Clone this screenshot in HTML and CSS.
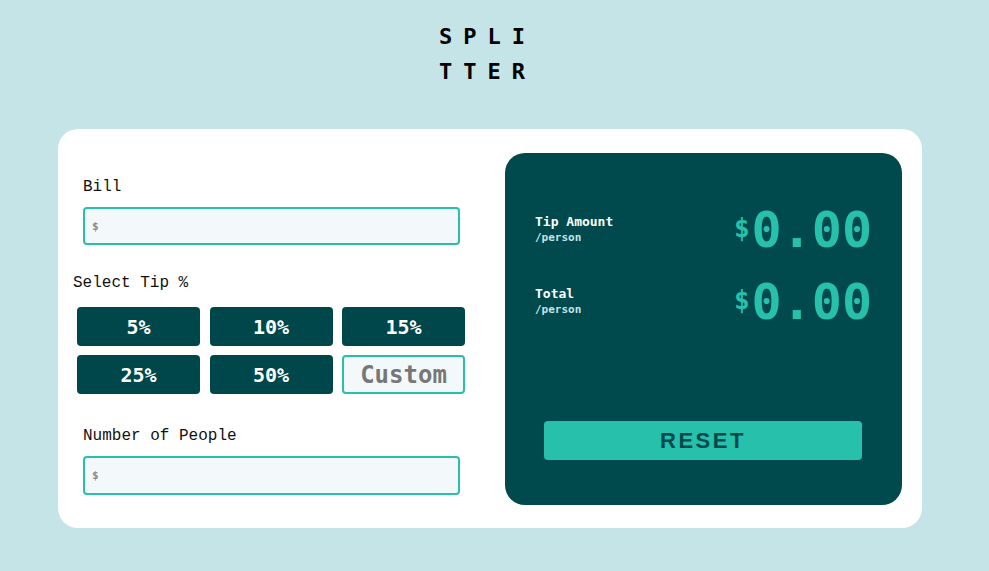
FILE: index.html
```html
<!DOCTYPE html>
<html lang="en">
<head>
<meta charset="utf-8">
<title>Splitter</title>
<link rel="stylesheet" href="styles.css">
</head>
<body>
<h1 class="logo">SPLITTER</h1>
<main class="card">
  <section class="form">
    <label class="field-label">Bill</label>
    <div class="input"><span class="prefix">$</span></div>
    <div class="tip-label">Select Tip %</div>
    <div class="tips">
      <button class="tip">5%</button>
      <button class="tip">10%</button>
      <button class="tip">15%</button>
      <button class="tip">25%</button>
      <button class="tip">50%</button>
      <button class="tip custom">Custom</button>
    </div>
    <label class="field-label people">Number of People</label>
    <div class="input"><span class="prefix">$</span></div>
  </section>
  <section class="result">
    <div class="row">
      <div class="row-label"><div class="row-title">Tip Amount</div><div class="row-sub">/person</div></div>
      <div class="amount"><span class="cur">$</span><span class="num">0.00</span></div>
    </div>
    <div class="row second">
      <div class="row-label"><div class="row-title">Total</div><div class="row-sub">/person</div></div>
      <div class="amount"><span class="cur">$</span><span class="num">0.00</span></div>
    </div>
    <button class="reset">RESET</button>
  </section>
</main>
</body>
</html>
```
FILE: styles.css
```css
* { box-sizing: border-box; }
html, body { margin: 0; padding: 0; }
body {
  background: #c5e4e7;
  font-family: "Liberation Mono", monospace;
  min-height: 571px;
}
.logo {
  margin: 19px auto 0;
  width: 100px;
  padding-right: 14px;
  box-sizing: content-box;
  font-family: "DejaVu Sans Mono", monospace;
  font-weight: bold;
  font-size: 22px;
  line-height: 35px;
  letter-spacing: 11px;
  text-align: center;
  word-break: break-all;
  color: #000;
}
.card {
  margin: 40px 0 0 58px;
  width: 864px;
  height: 399px;
  background: #fff;
  border-radius: 20px;
  padding: 24px 20px 23px 15px;
  display: grid;
  grid-template-columns: 400px 397px;
  column-gap: 32px;
}
.form { display: flex; flex-direction: column; }
.field-label {
  margin: 24px 0 0 10px;
  font-size: 16px;
  line-height: 20px;
  color: #111;
}
.field-label.people { margin-top: 32px; }
.input {
  margin: 10px 0 0 10px;
  width: 377px;
  height: 38px;
  border: 2px solid #26c0ab;
  border-radius: 4px;
  background: #f3f9fa;
  display: flex;
  align-items: center;
  padding-left: 7px;
}
.people + .input { height: 39px; }
.prefix {
  font-family: "DejaVu Sans Mono", monospace;
  font-weight: bold;
  font-size: 11px;
  color: #8a8a8a;
}
.tip-label {
  margin-top: 28px;
  font-size: 16px;
  line-height: 20px;
  color: #111;
}
.tips {
  margin: 14px 0 0 4px;
  width: 388px;
  display: grid;
  grid-template-columns: repeat(3, 1fr);
  gap: 9px 9.5px;
}
.tip {
  height: 39px;
  border: none;
  border-radius: 4px;
  background: #00474b;
  color: #fff;
  font-family: "DejaVu Sans Mono", monospace;
  font-weight: bold;
  font-size: 20px;
  padding: 0;
}
.tip.custom {
  background: #f3f9fa;
  border: 2px solid #26c0ab;
  color: #777;
  font-size: 24px;
}
.result {
  background: #00494d;
  border-radius: 20px;
  padding: 52px 30px 45px 30px;
  display: flex;
  flex-direction: column;
}
.row {
  display: flex;
  justify-content: space-between;
  align-items: center;
  height: 50px;
}
.row.second { margin-top: 22px; }
.row-title {
  font-family: "DejaVu Sans Mono", monospace;
  font-weight: bold;
  font-size: 13px;
  line-height: 16px;
  color: #fff;
}
.row-sub {
  font-family: "DejaVu Sans Mono", monospace;
  font-weight: bold;
  font-size: 11px;
  line-height: 16px;
  color: #c5e4e7;
}
.amount {
  display: flex;
  align-items: center;
  color: #26c0ab;
  font-family: "DejaVu Sans Mono", monospace;
  font-weight: bold;
}
.cur { font-size: 26px; line-height: 30px; margin-right: 2px; margin-top: -4px; }
.num { font-size: 50px; line-height: 50px; }
.reset {
  margin: auto 10px 0 9px;
  height: 39px;
  border: none;
  border-radius: 4px;
  background: #26c0ab;
  color: #00494d;
  font-family: "Liberation Sans", Arial, sans-serif;
  font-weight: bold;
  font-size: 22px;
  letter-spacing: 2.5px;
  padding: 0;
}
```
